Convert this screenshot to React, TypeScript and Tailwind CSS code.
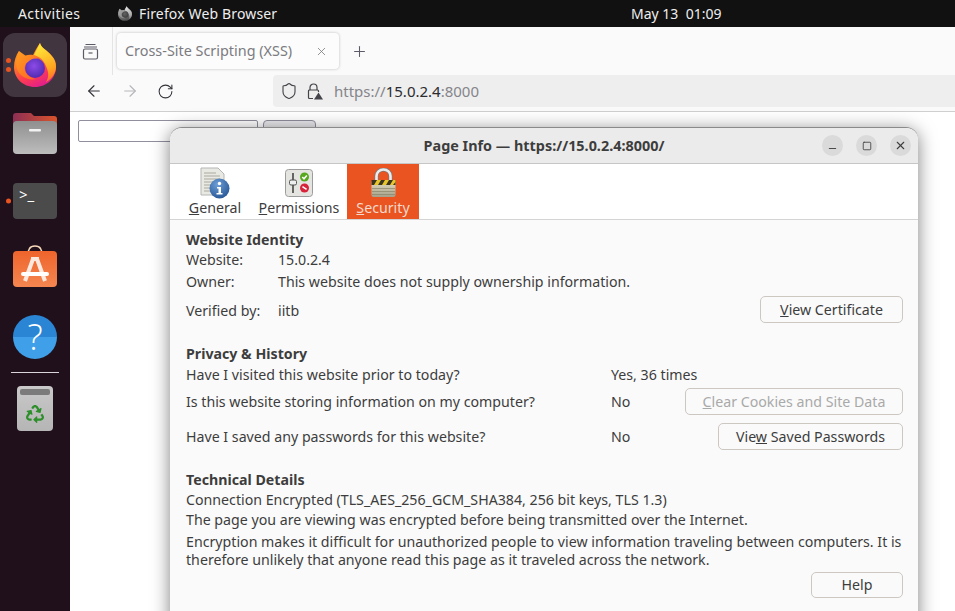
import { ArrowLeft, ArrowRight, Minus, Plus, RotateCw, Shield, Square, X } from 'lucide-react';
import { FaRecycle } from 'react-icons/fa';

const FirefoxLogo = ({ width = 42, height = 44, className = '' }: { width?: number; height?: number; className?: string }) => (
    <svg width={width} height={height} viewBox="0 0 42 44" className={className}>
        <defs>
            <linearGradient id="ffBody" x1="0.2" y1="0.15" x2="0.6" y2="1">
                <stop offset="0.2" stopColor="#ff8a1f" />
                <stop offset="0.65" stopColor="#ff3d4f" />
                <stop offset="1" stopColor="#e01f8c" />
            </linearGradient>
            <linearGradient id="ffFox" x1="0" y1="0" x2="0.8" y2="0.9">
                <stop offset="0" stopColor="#ffa020" />
                <stop offset="1" stopColor="#ff6a24" />
            </linearGradient>
            <linearGradient id="ffFlame" x1="0.4" y1="0" x2="0.7" y2="1">
                <stop offset="0" stopColor="#ffe83a" />
                <stop offset="0.7" stopColor="#ffa41f" />
                <stop offset="1" stopColor="#ff6a2a" />
            </linearGradient>
            <radialGradient id="ffCore" cx="0.45" cy="0.4" r="0.65">
                <stop offset="0" stopColor="#8d4ae8" />
                <stop offset="1" stopColor="#4b2aad" />
            </radialGradient>
        </defs>
        <path d="M26 0C27 5 33 7 37 12C41 16 42 20 42 24C42 35 33 44 21 44C9 44 0 35 0 24C0 18 2 12 5 8C6 12 7 14 8 15C11 12 15 11 19 12C21 8 23 4 26 0Z" fill="url(#ffBody)" />
        <path d="M26 0C27 5 33 7 37 12C41 16 42 20 42 24C42 30 38 36 32 39C36 33 34 27 31 21C29 16 24 13 20 12C22 8 24 4 26 0Z" fill="url(#ffFlame)" />
        <circle cx="21" cy="25" r="10" fill="url(#ffCore)" />
        <path d="M5 8L12 13C16 12 20 13 24 16C19 14.5 16 17 14 19C10.5 21 9.5 25 11.5 29C13.5 33 18 35.5 22 36C14 38 4 33 2.5 24C2 18 3 12 5 8Z" fill="url(#ffFox)" />
    </svg>
);

const FolderIcon = () => (
    <svg width="44" height="41" viewBox="0 0 44 41">
        <defs>
            <linearGradient id="folderBack" x1="0" y1="0" x2="1" y2="0">
                <stop offset="0" stopColor="#8d2f55" />
                <stop offset="1" stopColor="#d9542b" />
            </linearGradient>
            <linearGradient id="folderFront" x1="0" y1="0" x2="0" y2="1">
                <stop offset="0" stopColor="#8f8f8f" />
                <stop offset="1" stopColor="#bdbdbd" />
            </linearGradient>
        </defs>
        <path d="M3 0H18L21 3H41a3 3 0 0 1 3 3V20H0V3a3 3 0 0 1 3-3Z" fill="url(#folderBack)" />
        <rect x="0" y="8" width="44" height="33" rx="4" fill="url(#folderFront)" />
        <rect x="16" y="16" width="12" height="2.5" rx="1" fill="#f2f2f2" />
    </svg>
);

const StoreIcon = () => (
    <svg width="44" height="42" viewBox="0 0 44 42" className="-translate-y-[3px]">
        <defs>
            <linearGradient id="storeBag" x1="0" y1="0" x2="0" y2="1">
                <stop offset="0" stopColor="#ee642c" />
                <stop offset="1" stopColor="#f68650" />
            </linearGradient>
        </defs>
        <path d="M15 7L16.5 3.5Q18 1 22 1Q26 1 27.5 3.5L29 7" fill="none" stroke="#f6d9b8" strokeWidth="1.5" />
        <rect x="0" y="6" width="44" height="36" rx="4" fill="url(#storeBag)" />
        <path d="M20 14L12 36M24 14L32 36" stroke="#fbe9df" strokeWidth="4" fill="none" />
        <rect x="18" y="12" width="8" height="4" fill="#fbe9df" />
        <rect x="8" y="27" width="28" height="4" rx="2" fill="#fff" />
    </svg>
);

const HelpIcon = () => (
    <div className="flex h-[44px] w-[44px] items-center justify-center rounded-full bg-[linear-gradient(#2a86d4_50%,#3f9fe8_50%)] font-['Open_Sans',sans-serif] text-[36px] leading-none font-light text-white">?</div>
);

const TrashIcon = () => (
    <div className="flex h-[45px] w-[36px] flex-col items-center rounded-[4px] bg-gradient-to-b from-[#c9c9c9] to-[#b5b5b5] px-[3px] pt-[3px] text-[#2c8f29]">
        <div className="h-[6px] w-full rounded-[2px] bg-[#7b7b7b]" />
        <FaRecycle size={18} className="mt-[10px]" />
    </div>
);

const TerminalIcon = () => (
    <div className="h-[36px] w-[44px] rounded-[4px] bg-[#4b4b4b] pl-[6px] text-[15px] leading-[22px] text-white">
        &gt;_
    </div>
);

const DocInfoIcon = () => (
    <svg width="32" height="32" viewBox="0 0 32 32">
        <defs>
            <radialGradient id="infoBall" cx="0.4" cy="0.3" r="0.8">
                <stop offset="0" stopColor="#6f9fd8" />
                <stop offset="1" stopColor="#20508f" />
            </radialGradient>
        </defs>
        <path d="M2 1H19L25 7V28H2Z" fill="#e9e9e4" stroke="#b5b5b5" />
        <path d="M5 6H17M5 9H21M5 12H21M5 15H21M5 18H16M5 21H15M5 24H15" stroke="#a9a9a0" strokeWidth="1" />
        <circle cx="20.5" cy="21.5" r="10" fill="url(#infoBall)" />
        <circle cx="20.5" cy="16.5" r="1.7" fill="#fff" />
        <path d="M18 20H22V26H23.5V27.5H17.5V26H19.5V21.5H18Z" fill="#fff" />
    </svg>
);

const PermissionsIcon = () => (
    <svg width="28" height="28" viewBox="0 0 28 28" className="mb-[2px]">
        <rect x="0.5" y="0.5" width="27" height="27" rx="3" fill="#e4e4e0" stroke="#9c9c9c" />
        <path d="M8 4V24" stroke="#444" strokeWidth="1.6" />
        <rect x="4.5" y="11" width="7" height="5" rx="1.5" fill="#eee" stroke="#555" />
        <circle cx="19.5" cy="8" r="4.5" fill="#58a81f" />
        <path d="M17.3 8L19 9.8L21.8 6.6" stroke="#fff" strokeWidth="1.5" fill="none" />
        <circle cx="19.5" cy="19" r="4.5" fill="#d8243a" />
        <path d="M17 19H22" stroke="#fff" strokeWidth="1.6" transform="rotate(35 19.5 19)" />
    </svg>
);

const LockIcon = () => (
    <svg width="25" height="29" viewBox="0 0 25 29" className="mb-[2px]">
        <defs>
            <linearGradient id="lockBody" x1="0" y1="0" x2="0" y2="1">
                <stop offset="0" stopColor="#e6e0c4" />
                <stop offset="1" stopColor="#a5a08a" />
            </linearGradient>
        </defs>
        <path d="M5.5 13V8a7 6.5 0 0 1 14 0V13" fill="none" stroke="#7a7a7a" strokeWidth="4" />
        <path d="M5.5 13V8a7 6.5 0 0 1 14 0V13" fill="none" stroke="#ececec" strokeWidth="2.6" />
        <rect x="0.5" y="12" width="24" height="17" rx="2" fill="url(#lockBody)" />
        <rect x="0.5" y="12" width="24" height="5" fill="#3a3520" />
        <path d="M3 17L6 12H10L7 17ZM11 17L14 12H18L15 17ZM19 17L22 12H24.5V14L22 17Z" fill="#e8c62a" />
        <path d="M1 20.5H24M1 23.5H24M1 26.5H24" stroke="#8a8468" strokeWidth="0.7" />
    </svg>
);

const UrlLockIcon = () => (
    <svg width="16" height="17" viewBox="0 0 16 17" fill="none" stroke="#44444a" strokeWidth="1.2">
        <path d="M3 7V4.5a3.5 3.5 0 0 1 7 0V7" />
        <path d="M6 15.5H2.5a1 1 0 0 1-1-1V8a1 1 0 0 1 1-1H10.5a1 1 0 0 1 1 1V9" />
        <path d="M11.5 9.5L16 16.5H7Z" fill="#44444a" stroke="none" />
    </svg>
);

const ArchiveIcon = () => (
    <svg width="17" height="17" viewBox="0 0 17 17" fill="none" stroke="#5b5b66" strokeWidth="1.2">
        <path d="M3.5 1.5H13.5M2 4H15" />
        <rect x="1.5" y="6" width="14" height="10" rx="1.5" />
        <path d="M6.5 10H10.5" />
    </svg>
);

const DockItem = ({ children, active, dots = 0 }: { children: React.ReactNode; active?: boolean; dots?: number }) => (
    <div className={`relative flex h-[64px] w-[64px] items-center justify-center rounded-[12px] ${active ? 'bg-[#413640]' : ''}`}>
        {children}
        {dots > 0 && (
            <div className="absolute top-1/2 left-[3px] flex -translate-y-1/2 flex-col gap-[4px]">
                {Array.from({ length: dots }).map((_, i) => (
                    <div key={i} className="h-[5px] w-[5px] rounded-full bg-[#e95420]" />
                ))}
            </div>
        )}
    </div>
);

const WindowButton = ({ children }: { children: React.ReactNode }) => (
    <div className="flex h-[21px] w-[21px] items-center justify-center rounded-full bg-[#dadada] text-[#3d3d3d]">{children}</div>
);

const GtkButton = ({ children, width, disabled, height = 'h-[27px]' }: { children: React.ReactNode; width: string; disabled?: boolean; height?: string }) => (
    <div className={`flex items-center justify-center rounded-[5px] border border-[#cdc7c2] bg-[#fafafa] ${height} ${width} ${disabled ? 'text-[#a9a9a9]' : 'text-[#3d3d3d]'}`}>
        {children}
    </div>
);

const TabButton = ({ icon, children, active, width }: { icon: React.ReactNode; children: React.ReactNode; active?: boolean; width: string }) => (
    <div className={`flex h-[55px] flex-col items-center justify-end pb-[2px] ${width} ${active ? 'bg-[#e95420] text-[#f6d9cc]' : 'text-[#3d3d3d]'}`}>
        {icon}
        <div className="leading-[18px]">{children}</div>
    </div>
);

const Row = ({ label, value }: { label: string; value: string }) => (
    <div className="flex h-[20px] items-center">
        <div className="w-[92px]">{label}</div>
        <div>{value}</div>
    </div>
);

export default function App() {
    return (
        <div className="relative flex h-[611px] w-[955px] flex-col overflow-hidden bg-white font-['Noto_Sans',sans-serif] text-[14.2px]">
            {/* top bar */}
            <div className="flex h-[27px] shrink-0 items-center bg-[#111111] pl-[18px] text-[14px] text-[#eeeeee]">
                <div className="w-[100px] tracking-[0.4px]">Activities</div>
                <FirefoxLogo width={14} height={15} className="grayscale" />
                <div className="ml-[7px] w-[492px] tracking-[0.15px]">Firefox Web Browser</div>
                <div>May 13&nbsp; 01:09</div>
            </div>

            <div className="flex min-h-0 flex-1">
                {/* dock */}
                <div className="flex w-[70px] shrink-0 flex-col items-center gap-[4px] bg-[#20101c] pt-[6px]">
                    <DockItem active dots={2}>
                        <FirefoxLogo />
                    </DockItem>
                    <DockItem>
                        <FolderIcon />
                    </DockItem>
                    <DockItem dots={1}>
                        <TerminalIcon />
                    </DockItem>
                    <DockItem>
                        <StoreIcon />
                    </DockItem>
                    <DockItem>
                        <HelpIcon />
                    </DockItem>
                    <div className="-my-[1px] h-px w-[48px] bg-[#d8d4d7]" />
                    <DockItem>
                        <TrashIcon />
                    </DockItem>
                </div>

                {/* browser */}
                <div className="flex min-w-0 flex-1 flex-col bg-white">
                    <div className="flex h-[48px] shrink-0 items-center bg-[#fafafa]">
                        <div className="flex h-full w-[43px] items-center justify-end border-r border-[#e4e4e4] pr-[13px]">
                            <ArchiveIcon />
                        </div>
                        <div className="ml-[4px] flex h-[36px] w-[222px] items-center justify-between rounded-[4px] bg-[#fcfcfc] pr-[11px] pl-[8px] text-[14.4px] text-[#7b7b80] shadow-[0_0_3px_rgba(0,0,0,0.25)]">
                            <span>Cross-Site Scripting (XSS)</span>
                            <X size={13} strokeWidth={1.5} />
                        </div>
                        <Plus size={17} strokeWidth={1.5} className="ml-[12px] text-[#5b5b66]" />
                    </div>
                    <div className="flex h-[37px] shrink-0 items-start border-b border-[#cfcfcf] bg-[#fafafa]">
                        <div className="flex h-[32px] w-[203px] items-center gap-[18px] pl-[15px] text-[#33333a]">
                            <ArrowLeft size={18} strokeWidth={1.5} />
                            <ArrowRight size={18} strokeWidth={1.5} className="text-[#b5b5ba]" />
                            <RotateCw size={17} strokeWidth={1.5} />
                        </div>
                        <div className="flex h-[32px] flex-1 items-center rounded-l-[4px] bg-[#eeeeee] pl-[7px] text-[#44444a]">
                            <Shield size={18} strokeWidth={1.5} />
                            <div className="ml-[9px]">
                                <UrlLockIcon />
                            </div>
                            <div className="ml-[11px] text-[15px] text-[#85858a]">
                                https://<span className="text-[#2b2b30]">15.0.2.4</span>:8000
                            </div>
                        </div>
                    </div>
                    <div className="flex items-start gap-[5px] pt-[8px] pl-[8px]">
                        <div className="h-[22px] w-[180px] rounded-[2px] border border-[#8f8f9d] bg-white" />
                        <div className="h-[22px] w-[53px] rounded-[4px] border border-[#8f8f9d] bg-[#e9e9ed]" />
                    </div>
                </div>
            </div>

            {/* page info window */}
            <div className="absolute top-[127px] left-[170px] h-[500px] w-[748px] rounded-t-[12px] border-t border-[#8a8a8a] bg-[#fafafa] text-[#3d3d3d] shadow-[0_3px_18px_rgba(0,0,0,0.5)]">
                <div className="flex h-[36px] items-center justify-between rounded-t-[12px] border-b border-[#c6c6c6] bg-[#ebebeb] pr-[7px] pl-[121px]">
                    <div className="flex-1 text-center text-[14.4px] font-bold">Page Info — https://15.0.2.4:8000/</div>
                    <div className="ml-[25px] flex gap-[13px]">
                        <WindowButton>
                            <Minus size={11} className="translate-y-[3px]" />
                        </WindowButton>
                        <WindowButton>
                            <Square size={10} />
                        </WindowButton>
                        <WindowButton>
                            <X size={13} />
                        </WindowButton>
                    </div>
                </div>

                <div className="flex h-[56px] border-b border-[#d4d4d4] bg-white pl-[9px]">
                    <TabButton width="w-[72px]" icon={<DocInfoIcon />}>
                        <u>G</u>eneral
                    </TabButton>
                    <TabButton width="w-[96px]" icon={<PermissionsIcon />}>
                        <u>P</u>ermissions
                    </TabButton>
                    <TabButton active width="w-[72px]" icon={<LockIcon />}>
                        <u>S</u>ecurity
                    </TabButton>
                </div>

                <div className="flex flex-col pt-[10px] pr-[15px] pl-[16px]">
                    <div className="h-[20px] leading-[20px] font-bold">Website Identity</div>
                    <Row label="Website:" value="15.0.2.4" />
                    <div className="mt-[2px]">
                        <Row label="Owner:" value="This website does not supply ownership information." />
                    </div>
                    <div className="mt-[4px] flex h-[27px] items-center justify-between">
                        <div className="flex translate-y-px">
                            <div className="w-[92px]">Verified by:</div>
                            <div>iitb</div>
                        </div>
                        <GtkButton width="w-[143px]">
                            <span>
                                <u>V</u>iew Certificate
                            </span>
                        </GtkButton>
                    </div>

                    <div className="mt-[21px] h-[20px] leading-[20px] font-bold">Privacy &amp; History</div>
                    <div className="mt-px flex h-[20px] items-center">
                        <div className="w-[425px]">Have I visited this website prior to today?</div>
                        <div>Yes, 36 times</div>
                    </div>
                    <div className="mt-[3px] flex h-[27px] items-center">
                        <div className="w-[425px]">Is this website storing information on my computer?</div>
                        <div>No</div>
                        <div className="flex-1" />
                        <GtkButton disabled width="w-[218px]">
                            <span>
                                <u>C</u>lear Cookies and Site Data
                            </span>
                        </GtkButton>
                    </div>
                    <div className="mt-[8px] flex h-[27px] items-center">
                        <div className="w-[425px]">Have I saved any passwords for this website?</div>
                        <div>No</div>
                        <div className="flex-1" />
                        <GtkButton width="w-[185px]">
                            <span>
                                Vie<u>w</u> Saved Passwords
                            </span>
                        </GtkButton>
                    </div>

                    <div className="mt-[20px] h-[20px] leading-[20px] font-bold">Technical Details</div>
                    <div className="h-[20px] leading-[20px]">Connection Encrypted (TLS_AES_256_GCM_SHA384, 256 bit keys, TLS 1.3)</div>
                    <div className="h-[20px] leading-[20px]">The page you are viewing was encrypted before being transmitted over the Internet.</div>
                    <div className="mt-[3px] leading-[18px]">
                        Encryption makes it difficult for unauthorized people to view information traveling between computers. It is therefore unlikely that anyone read this page as it traveled across the network.
                    </div>
                    <div className="mt-[3px] flex justify-end">
                        <GtkButton width="w-[92px]" height="h-[26px]">Help</GtkButton>
                    </div>
                </div>
            </div>
        </div>
    );
}
